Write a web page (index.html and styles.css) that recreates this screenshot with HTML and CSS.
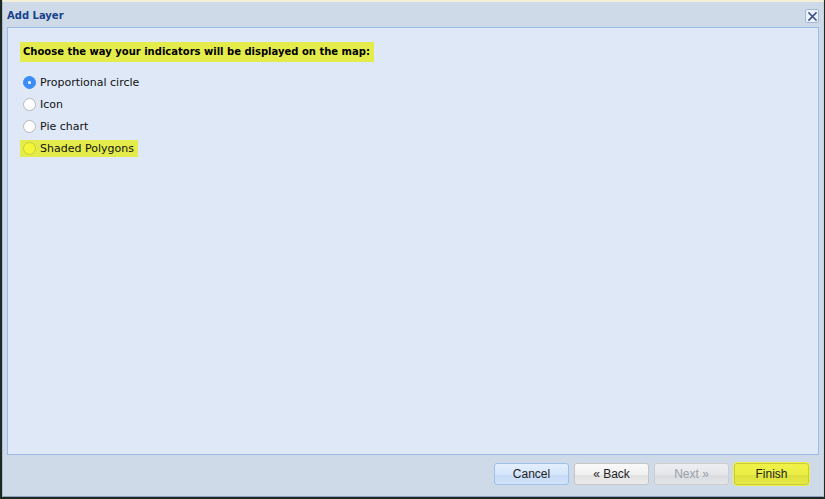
FILE: index.html
```html
<!DOCTYPE html>
<html>
<head>
<meta charset="utf-8">
<link rel="stylesheet" href="styles.css">
</head>
<body>
<div class="window">
  <div class="header">
    <span class="title">Add Layer</span>
    <span class="close"><svg width="11" height="11" viewBox="0 0 11 11"><path d="M2 2 L9 9 M9 2 L2 9" stroke="#3b4f8c" stroke-width="1.6" stroke-linecap="square"/></svg></span>
  </div>
  <div class="body">
    <div class="question"><span class="hl">Choose the way your indicators will be displayed on the map:</span></div>
    <div class="options">
      <label class="opt"><span class="radio checked"></span><span>Proportional circle</span></label>
      <label class="opt"><span class="radio"></span><span>Icon</span></label>
      <label class="opt"><span class="radio"></span><span>Pie chart</span></label>
      <label class="opt hlopt"><span class="radio yellow"></span><span>Shaded Polygons</span></label>
    </div>
  </div>
  <div class="footer">
    <button class="btn cancel">Cancel</button>
    <button class="btn back">« Back</button>
    <button class="btn next">Next »</button>
    <button class="btn finish">Finish</button>
  </div>
</div>
</body>
</html>
```
FILE: styles.css
```css
html, body {
  margin: 0;
  padding: 0;
  background: #1e2a1f;
  width: 825px;
  height: 499px;
  overflow: hidden;
}
.window {
  margin-left: 2px;
  width: 822px;
  height: 497px;
  box-sizing: border-box;
  background: #cfdae8;
  border-top: 2px solid #f4efd6;
  border-left: 1px solid #a9bcd6;
  border-right: 1px solid #c3d1e3;
  border-bottom: 1px solid #8da2c0;
  display: flex;
  flex-direction: column;
  font-family: "DejaVu Sans", Verdana, sans-serif;
}
.header {
  height: 25px;
  display: flex;
  align-items: center;
  justify-content: space-between;
  padding: 0 4px 0 4px;
}
.title {
  color: #15428b;
  font-weight: bold;
  font-size: 10px;
  padding-top: 1px;
}
.close {
  width: 14px;
  height: 14px;
  box-sizing: border-box;
  border: 1px solid #9fb7d8;
  border-radius: 2px;
  background: #eef3fb;
  display: flex;
  align-items: center;
  justify-content: center;
  margin-top: 3px;
}
.body {
  margin: 0 4px 0 4px;
  height: 428px;
  box-sizing: border-box;
  background: #dfe8f6;
  border: 1px solid #99bbe8;
  padding: 12px 12px;
}
.hl {
  display: inline-block;
  background: #e4ec4c;
  padding: 4px 4px 4px 3px;
  font-weight: bold;
  font-size: 10px;
  line-height: 12px;
  color: #000;
}
.options {
  margin-top: 12px;
  display: flex;
  flex-direction: column;
  gap: 5px;
}
.opt {
  display: flex;
  align-items: center;
  gap: 4px;
  font-size: 11px;
  color: #111;
  height: 17px;
  width: max-content;
  padding-right: 4px;
}
.hlopt {
  background: #e4ec4c;
}
.radio {
  width: 13px;
  height: 13px;
  border-radius: 50%;
  box-sizing: border-box;
  border: 1px solid #b8b8b8;
  background: #fff;
  margin-left: 3px;
}
.radio.checked {
  background: #3b8df5;
  border-color: #3b8df5;
  position: relative;
}
.radio.checked::after {
  content: "";
  position: absolute;
  left: 4px;
  top: 4px;
  width: 3px;
  height: 3px;
  border-radius: 50%;
  background: #fff;
}
.radio.yellow {
  background: #f4f63a;
  border-color: #c8cb36;
}
.footer {
  flex: 1;
  display: flex;
  justify-content: flex-end;
  align-items: flex-start;
  gap: 5px;
  padding: 8px 14px 0 0;
}
.btn {
  width: 75px;
  height: 22px;
  box-sizing: border-box;
  border-radius: 3px;
  font-family: "Liberation Sans", Arial, sans-serif;
  font-size: 12px;
  padding: 0;
  color: #222;
}
.cancel {
  border: 1px solid #9ec0ea;
  background: linear-gradient(#e3effd 0%, #d4e5fb 55%, #c7dbf7 56%, #d2e3fa 100%);
}
.back {
  border: 1px solid #c6c6c6;
  background: linear-gradient(#fafafa 0%, #f0f0f0 55%, #e2e2e2 56%, #ececec 100%);
}
.next {
  border: 1px solid #cdcdcd;
  background: linear-gradient(#eceef1 0%, #e4e6ea 55%, #dadcdf 56%, #e2e4e7 100%);
  color: #9aa0a8;
}
.finish {
  border: 1px solid #c9cd3c;
  background: linear-gradient(#f0f248 0%, #eaed44 55%, #dde03e 56%, #e6ea44 100%);
  box-shadow: 0 0 0 1px #eef04a;
}
```
